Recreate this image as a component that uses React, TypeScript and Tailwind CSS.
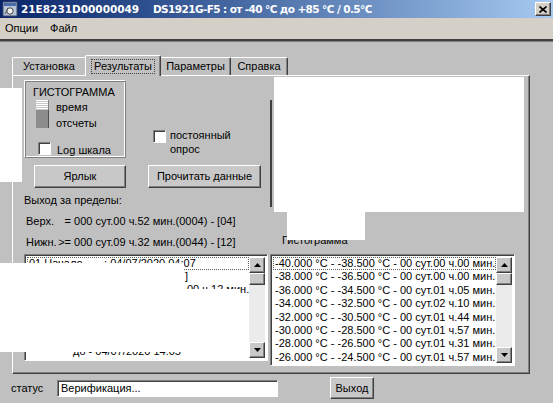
import React from "react";

const raised =
  "border border-t-white border-l-white border-r-[#404040] border-b-[#404040] shadow-[inset_-1px_-1px_0_#808080]";
const sunken =
  "border border-t-[#808080] border-l-[#808080] border-r-white border-b-white shadow-[inset_1px_1px_0_#404040]";

function Arrow({ up }: { up: boolean }) {
  return (
    <div className={"w-[16px] h-[16px] shrink-0 bg-[#c8c8c8] flex items-center justify-center " + raised}>
      <svg width="7" height="4" viewBox="0 0 7 4">
        {up ? <path d="M3.5 0 L7 4 L0 4Z" fill="black" /> : <path d="M0 0 L7 0 L3.5 4Z" fill="black" />}
      </svg>
    </div>
  );
}

function Scrollbar() {
  return (
    <div className="w-[16px] h-full flex flex-col bg-[#ebebeb]">
      <Arrow up />
      <div className={"w-[16px] h-[12px] bg-[#c8c8c8] " + raised} />
      <div className="flex-1" />
      <Arrow up={false} />
    </div>
  );
}

function CheckBox() {
  return <div className={"w-[13px] h-[13px] bg-white shrink-0 " + sunken} />;
}

const histRows = [
  "-40.000 °C - -38.500 °C - 00 сут.00 ч.00 мин.",
  "-38.000 °C - -36.500 °C - 00 сут.00 ч.00 мин.",
  "-36.000 °C - -34.500 °C - 00 сут.01 ч.05 мин.",
  "-34.000 °C - -32.500 °C - 00 сут.02 ч.10 мин.",
  "-32.000 °C - -30.500 °C - 00 сут.01 ч.44 мин.",
  "-30.000 °C - -28.500 °C - 00 сут.01 ч.57 мин.",
  "-28.000 °C - -26.500 °C - 00 сут.01 ч.31 мин.",
  "-26.000 °C - -24.500 °C - 00 сут.01 ч.57 мин.",
];

export default function App() {
  return (
    <div className="relative w-[553px] h-[403px] overflow-hidden bg-[#c0c0c0] text-black font-['Liberation_Sans',Arial,sans-serif] text-[11px] leading-[13px]">
      {/* Title bar */}
      <div className="h-[18px] flex items-center bg-linear-to-r from-[#0a246a] to-[#a6caf0] pl-[2px] pr-[2px]">
        <svg width="16" height="16" viewBox="0 0 16 16" className="shrink-0">
          <rect x="1" y="1" width="14" height="14" fill="#b8c4d8" stroke="#3a4a6a" />
          <rect x="2" y="2" width="12" height="3" fill="#4a6aa8" />
          <circle cx="8" cy="10" r="3.2" fill="#f0f0f0" stroke="#444" />
          <path d="M3 13 L6 7" stroke="#555" />
        </svg>
        <span className="ml-[3px] w-[132px] font-['DejaVu_Sans',sans-serif] font-bold text-[10.5px] text-white whitespace-pre">
          21E8231D00000049
        </span>
        <span className="font-['DejaVu_Sans',sans-serif] font-bold text-[10.5px] tracking-[-0.6px] text-white whitespace-pre">
          DS1921G-F5 : от -40 °C до +85 °C / 0.5°C
        </span>
        <div className={"ml-auto w-[16px] h-[14px] bg-[#d4d0c8] flex items-center justify-center " + raised}>
          <svg width="8" height="7" viewBox="0 0 8 7">
            <path d="M0.5 0.5 L7.5 6.5 M7.5 0.5 L0.5 6.5" stroke="black" strokeWidth="1.6" />
          </svg>
        </div>
      </div>

      {/* Menu */}
      <div className="h-[21px] bg-[#d4d0c8] flex items-center">
        <span className="ml-[5px]">Опции</span>
        <span className="ml-[12px]">Файл</span>
      </div>
      <div className="h-[2px] bg-[#404040]" />
      <div className="h-px bg-[#808080]" />

      {/* Tabs */}
      <div className="mt-[13px] pl-[12px] h-[20px] flex items-end">
        <div className="w-[73px] h-[18px] border-t border-l border-white rounded-tl-[2px] flex items-center justify-center">
          Установка
        </div>
        <div className="relative z-10 -mb-px w-[76px] h-[21px] bg-[#c0c0c0] border-t border-l border-white border-r border-r-[#404040] shadow-[inset_-1px_0_0_#808080] rounded-t-[2px] flex items-center justify-center">
          <span className="px-[2px] border border-dotted border-[#404040]">Результаты</span>
        </div>
        <div className="w-[70px] h-[18px] border-t border-white border-r border-r-[#404040] shadow-[inset_-1px_0_0_#808080] rounded-tr-[2px] flex items-center justify-center">
          Параметры
        </div>
        <div className="w-[57px] h-[18px] border-t border-white border-r border-r-[#404040] shadow-[inset_-1px_0_0_#808080] rounded-tr-[2px] flex items-center justify-center">
          Справка
        </div>
      </div>

      {/* Panel */}
      <div className="ml-[12px] w-[518px] h-[299px] border-t border-l border-white border-r border-b border-r-[#404040] border-b-[#404040] shadow-[inset_-1px_-1px_0_#808080] flex pl-[11px]">
        {/* Left column */}
        <div className="w-[246px] flex flex-col">
          <div className="flex">
            {/* group box */}
            <div className="mt-[4px] w-[102px] h-[78px] border border-t-white border-l-white border-r-[#808080] border-b-[#808080] shadow-[inset_1px_1px_0_#808080,inset_-1px_-1px_0_#ffffff] flex flex-col">
              <div className="mt-[5px] pl-[8px]">ГИСТОГРАММА</div>
              <div className="mt-[1px] flex">
                <div className="ml-[11px] w-[13px] h-[28px] flex flex-col">
                  <div className="h-[10px] bg-[repeating-linear-gradient(to_bottom,#ffffff_0px,#ffffff_1px,#c8c8c8_1px,#c8c8c8_2px)] border-r border-[#808080]" />
                  <div className="h-[18px] bg-[#8c8c8c] border-r border-[#505050]" />
                </div>
                <div className="ml-[7px] flex flex-col">
                  <div className="mt-[1px]">время</div>
                  <div className="mt-[3px]">отсчеты</div>
                </div>
              </div>
              <div className="mt-[9px] flex items-center">
                <div className="ml-[13px]">
                  <CheckBox />
                </div>
                <span className="ml-[6px] mt-[5px]">Log шкала</span>
              </div>
            </div>
            {/* checkbox area */}
            <div className="ml-[27px] mt-[54px] flex">
              <CheckBox />
              <div className="ml-[4px] -mt-[1px] flex flex-col">
                <span>постоянный</span>
                <span className="mt-[1px]">опрос</span>
              </div>
            </div>
          </div>

          <div className="mt-[7px] flex">
            <div className={"ml-[10px] w-[92px] h-[23px] bg-[#c8c8c8] flex items-center justify-center " + raised}>
              Ярлык
            </div>
            <div className={"ml-[22px] w-[113px] h-[23px] bg-[#c8c8c8] flex items-center justify-center " + raised}>
              Прочитать данные
            </div>
          </div>

          <div className="mt-[6px]">Выход за пределы:</div>
          <div className="mt-[8px] pl-[2px] flex whitespace-pre">
            <span className="w-[31px]">Верх.</span>
            <span className="w-[14px] text-right">=</span>
            <span> 000 сут.00 ч.52 мин.(0004) - [04]</span>
          </div>
          <div className="mt-[8px] pl-[2px] flex whitespace-pre">
            <span className="w-[31px]">Нижн.</span>
            <span className="w-[14px] text-right">&gt;=</span>
            <span> 000 сут.09 ч.32 мин.(0044) - [12]</span>
          </div>

          {/* left list */}
          <div className={"mt-[5px] w-[244px] h-[107px] bg-white flex p-[2px] " + sunken}>
            <div className="flex-1 flex flex-col whitespace-pre overflow-hidden">
              <div className="h-[13px] border border-dotted border-[#606060] pl-[1px] leading-[11px]">
                01.Начало       : 04/07/2020 04:07
              </div>
              <div className="h-[13px] pl-[158px]">]</div>
              <div className="h-[13px] pl-[160px]">00 ч.12 мин.</div>
              <div className="h-[13px]" />
              <div className="h-[13px]" />
              <div className="h-[13px] pl-[180px]">мин.</div>
              <div className="h-[13px]" />
              <div className="h-[13px] pl-[46px]">до - 04/07/2020 14:05</div>
            </div>
            <Scrollbar />
          </div>
        </div>

        {/* Right column */}
        <div className="flex flex-col">
          <div className="mt-[1px] flex h-[135px]">
            <div className="mt-[23px] w-[2px] h-[107px] bg-[#404040]" />
            <div className="ml-[2px] w-[250px] h-[135px] bg-white" />
          </div>
          <div className="mt-[22px] pl-[12px]">Гистограмма</div>
          <div className={"mt-[7px] w-[245px] h-[112px] bg-white flex p-[2px] " + sunken}>
            <div className="flex-1 flex flex-col whitespace-pre overflow-hidden">
              {histRows.map((r, i) => (
                <div
                  key={i}
                  className={
                    i === 0
                      ? "h-[13.4px] border border-dotted border-[#606060] pl-[1px] leading-[11.4px]"
                      : "h-[13.4px] pl-[2px] leading-[13.4px]"
                  }
                >
                  {r}
                </div>
              ))}
            </div>
            <Scrollbar />
          </div>
        </div>
      </div>

      {/* Status row */}
      <div className="h-[24px] mt-[2px] flex items-center pl-[11px]">
        <span className="w-[46px]">статус</span>
        <div className={"w-[221px] h-[17px] bg-white flex items-center pl-[3px] " + sunken}>Верификация...</div>
        <div className={"ml-[52px] w-[44px] h-[22px] bg-[#c8c8c8] flex items-center justify-center " + raised}>
          Выход
        </div>
      </div>

      {/* Redaction overlays */}
      <div className="absolute left-0 top-[88px] w-[22px] h-[94px] bg-white" />
      <div className="absolute left-[287px] top-[212px] w-[78px] h-[28px] bg-white" />
      <div className="absolute left-0 top-[263px] w-[184px] h-[89px] bg-white" />
      <div className="absolute left-[184px] top-[289px] w-[56px] h-[58px] bg-white" />
      <div className="absolute left-[184px] top-[345px] w-[12px] h-[7px] bg-white" />
    </div>
  );
}
